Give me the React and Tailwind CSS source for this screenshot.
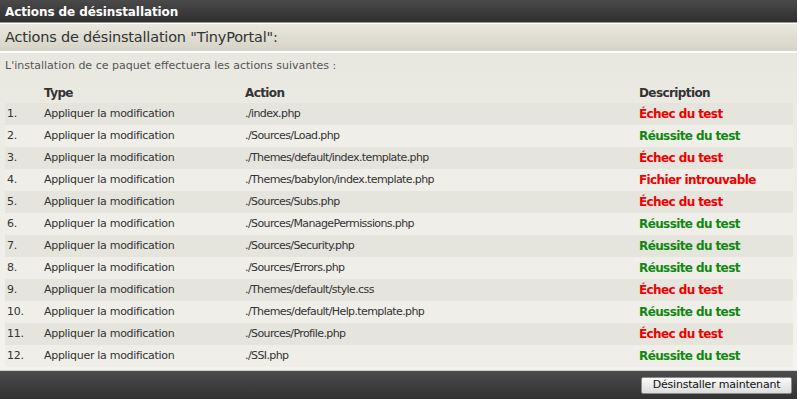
import React from 'react';

const rows = [
  ['./index.php', false, 'Échec du test'],
  ['./Sources/Load.php', true, 'Réussite du test'],
  ['./Themes/default/index.template.php', false, 'Échec du test'],
  ['./Themes/babylon/index.template.php', false, 'Fichier introuvable'],
  ['./Sources/Subs.php', false, 'Échec du test'],
  ['./Sources/ManagePermissions.php', true, 'Réussite du test'],
  ['./Sources/Security.php', true, 'Réussite du test'],
  ['./Sources/Errors.php', true, 'Réussite du test'],
  ['./Themes/default/style.css', false, 'Échec du test'],
  ['./Themes/default/Help.template.php', true, 'Réussite du test'],
  ['./Sources/Profile.php', false, 'Échec du test'],
  ['./SSI.php', true, 'Réussite du test'],
];

const App = () => {
  return (
    <div className="w-[799px] h-[399px] bg-white overflow-hidden font-['DejaVu_Sans',sans-serif]">
      <div className="w-[797px]">
        {/* Title bar */}
        <div className="h-[23px] flex items-center pt-[2px] px-[5px] bg-[linear-gradient(#4a4a4a,#2f2f2f)] border-b border-[#9a9a9a] text-white text-[12px] font-bold tracking-[-0.1px]">
          Actions de désinstallation
        </div>
        <div className="h-px bg-white" />

        {/* Sub title */}
        <div className="h-[27px] flex items-center px-[5px] bg-[linear-gradient(#e9e8df,#d5d3c6)] text-[#333] text-[14.5px] tracking-[-0.2px]">
          Actions de désinstallation "TinyPortal":
        </div>
        <div className="h-[2px] bg-white" />

        {/* Content */}
        <div className="h-[317px] px-[5px] pt-[4px] bg-[linear-gradient(#e9e8e0,#f4f3ee)] text-[11px] tracking-[-0.3px]">
          <div className="h-[17px] leading-[17px] text-[#555] tracking-[0px]">
            L'installation de ce paquet effectuera les actions suivantes :
          </div>
          <div className="h-[8px]" />
          <div className="grid grid-cols-[39px_201px_394px_1fr] h-[21px] items-center text-[#333] font-bold text-[12px] tracking-[-0.6px]">
            <div />
            <div>Type</div>
            <div>Action</div>
            <div>Description</div>
          </div>
          {rows.map(([file, ok, desc], i) => (
            <div
              key={i}
              className={
                'grid grid-cols-[39px_201px_394px_1fr] h-[22px] items-center text-[#333] w-[788px] ' +
                (i % 2 === 0 ? 'bg-[#e5e4dd]' : 'bg-[#efeee8]')
              }
            >
              <div className="pl-[2px]">{i + 1}.</div>
              <div>Appliquer la modification</div>
              <div className="tracking-[-0.6px]">{file}</div>
              <div className={'font-bold text-[12px] tracking-[-0.6px] ' + (ok ? 'text-[#118811]' : 'text-[#ee0000]')}>{desc}</div>
            </div>
          ))}
        </div>

        {/* Footer */}
        <div className="h-px bg-[#cfcfcf]" />
        <div className="h-[28px] flex items-center justify-end pr-[5px] bg-[linear-gradient(#4c4c4c,#323232)]">
          <button className="h-[17px] w-[151px] flex items-center justify-center rounded-[2px] border border-[#8a8a8a] bg-[linear-gradient(#fafafa,#dcdcdc)] text-[#111] text-[11px] tracking-[-0.2px]">
            Désinstaller maintenant
          </button>
        </div>
      </div>
    </div>
  );
};

export default App;
